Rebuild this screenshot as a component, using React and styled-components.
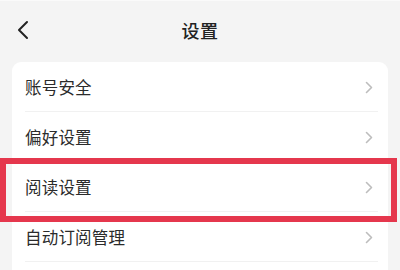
import React from "react";
import styled, { createGlobalStyle } from "styled-components";

const GlobalStyle = createGlobalStyle`
  html, body {
    margin: 0;
    padding: 0;
    background: #f4f4f4;
  }
  body {
    font-family: "Noto Sans CJK SC", "Noto Sans", sans-serif;
  }
`;

const Screen = styled.div`
  width: 400px;
  height: 270px;
  overflow: hidden;
  background: #f4f4f4;
  border-top: 1px solid #fafafa;
  box-sizing: border-box;
`;

const Header = styled.div`
  height: 57px;
  display: grid;
  grid-template-columns: 60px 1fr 60px;
  align-items: center;
`;

const BackButton = styled.button`
  border: none;
  background: none;
  padding: 0 0 0 16px;
  display: flex;
  align-items: center;
  cursor: pointer;
`;

const Title = styled.h1`
  margin: 0;
  text-align: center;
  font-size: 18px;
  font-weight: 500;
  color: #222;
  letter-spacing: 0.5px;
`;

const Card = styled.div`
  margin: 4px 12px 0 12px;
  background: #fff;
  border-radius: 9px;
  padding-bottom: 20px;
`;

const Row = styled.div`
  position: relative;
  height: 50px;
  display: flex;
  align-items: center;
  justify-content: space-between;
  padding: 0 15px 0 13px;

  &::after {
    content: "";
    position: absolute;
    left: 13px;
    right: 10px;
    bottom: 0;
    height: 1px;
    background: #f1f1f1;
  }
`;

const Label = styled.span`
  font-size: 16.5px;
  color: #2b2b2b;
  letter-spacing: 0.2px;
`;

const Highlight = styled.div`
  position: absolute;
  left: -12px;
  top: -4px;
  right: -9px;
  bottom: -10px;
  border: 6px solid #e5374d;
  pointer-events: none;
`;

const Chevron = () => (
  <svg width="8" height="13" viewBox="0 0 8 13">
    <polyline
      points="1.5,1.5 6.5,6.5 1.5,11.5"
      fill="none"
      stroke="#bdbdbd"
      strokeWidth="1.6"
      strokeLinecap="round"
      strokeLinejoin="round"
    />
  </svg>
);

const items = [
  { label: "账号安全" },
  { label: "偏好设置" },
  { label: "阅读设置", marked: true },
  { label: "自动订阅管理" },
];

export default function App() {
  return (
    <Screen>
      <GlobalStyle />
      <Header>
        <BackButton aria-label="返回">
          <svg width="14" height="20" viewBox="0 0 14 20">
            <polyline
              points="11,2 3,10 11,18"
              fill="none"
              stroke="#222"
              strokeWidth="2"
              strokeLinecap="round"
              strokeLinejoin="round"
            />
          </svg>
        </BackButton>
        <Title>设置</Title>
        <div />
      </Header>
      <Card>
        {items.map((item) => (
          <Row key={item.label}>
            <Label>{item.label}</Label>
            <Chevron />
            {item.marked && <Highlight />}
          </Row>
        ))}
      </Card>
    </Screen>
  );
}
